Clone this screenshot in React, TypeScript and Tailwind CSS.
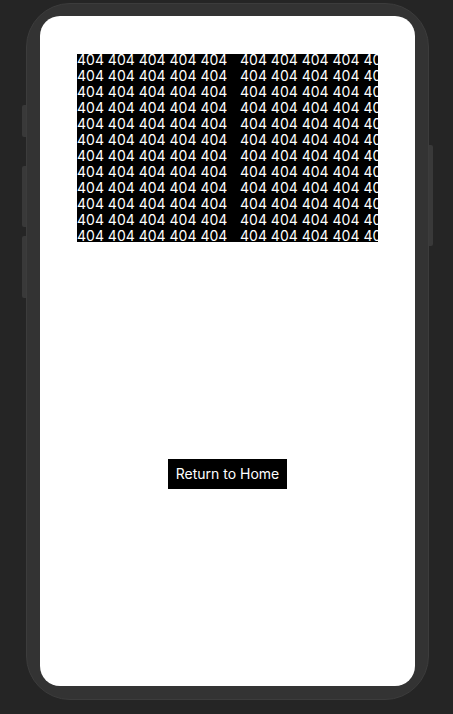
import React from "react";

const ROWS = Array.from({ length: 13 });
const CHUNK = "404 404 404 404 404";

const NotFound = () => {
  return (
    <div className="flex flex-col items-center h-full">
      {/* 404 wall */}
      <div className="mt-[38px] w-[301px] h-[188px] bg-black overflow-hidden">
        <div className="-mt-[2px] text-white text-[14px] leading-[16px] whitespace-nowrap">
          {ROWS.map((_, i) => (
            <div key={i} className="flex">
              <span className="w-[163px] shrink-0">{CHUNK}</span>
              <span className="shrink-0">{CHUNK}</span>
            </div>
          ))}
        </div>
      </div>

      <button className="mt-[217px] h-[30px] px-2 bg-black text-white text-[14px] leading-[20px]">
        Return to Home
      </button>
    </div>
  );
};

export default function App() {
  return (
    <div
      className="w-[453px] h-[714px] bg-[#252525] overflow-hidden pt-[3px]"
      style={{ fontFamily: "Inter, 'Noto Sans', sans-serif" }}
    >
      <div className="relative ml-[26px] w-[403px] h-[697px] rounded-[44px] bg-[#333333] border border-[#3c3c3c] pt-[12px] pb-[13px] px-[13px]">
        {/* side buttons */}
        <div className="absolute -left-[5px] top-[101px] w-[4px] h-[32px] rounded-l-[2px] bg-[#393939]" />
        <div className="absolute -left-[5px] top-[162px] w-[4px] h-[61px] rounded-l-[2px] bg-[#393939]" />
        <div className="absolute -left-[5px] top-[232px] w-[4px] h-[62px] rounded-l-[2px] bg-[#393939]" />
        <div className="absolute -right-[5px] top-[141px] w-[4px] h-[101px] rounded-r-[2px] bg-[#393939]" />

        <div className="w-full h-full bg-white rounded-[20px] overflow-hidden">
          <NotFound />
        </div>
      </div>
    </div>
  );
}
